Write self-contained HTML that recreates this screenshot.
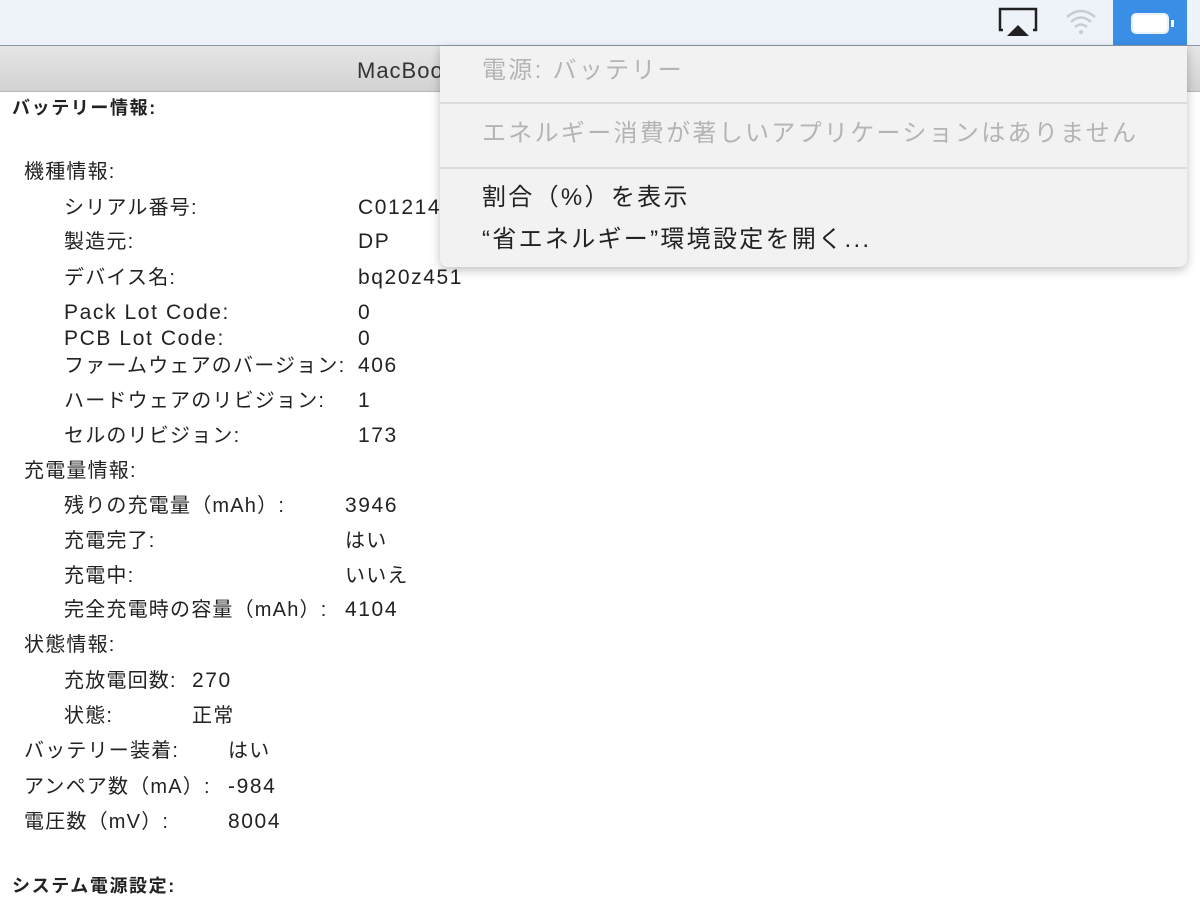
<!DOCTYPE html>
<html><head><meta charset="utf-8"><style>
*{margin:0;padding:0}
body{width:1200px;height:900px;overflow:hidden;background:#fff;position:relative;font-family:"Liberation Sans","Noto Sans CJK JP",sans-serif;color:#222}
.mb{position:absolute;left:0;top:0;width:1200px;height:45px;background:#eef3f9;border-bottom:1px solid #8a98a4}
.tb{position:absolute;left:0;top:46px;width:1200px;height:45px;background:linear-gradient(#e6e6e6,#d2d2d2);border-bottom:1px solid #b8b8b8}
.t{position:absolute;white-space:nowrap;font-size:20px;letter-spacing:1.2px;line-height:26px;transform:translateY(-13px)}
.v{font-size:21px;letter-spacing:1.6px}
.b{font-weight:bold;font-size:18px;letter-spacing:1.6px}
.menu{position:absolute;left:440px;top:46px;width:747px;height:221px;background:#f2f2f3;border-radius:0 0 8px 8px;box-shadow:0 3px 10px rgba(0,0,0,.25)}
.menu .t{font-size:24px;letter-spacing:2.3px;line-height:30px;transform:translateY(-15px)}
.sep{position:absolute;left:0;width:747px;height:2px;background:#dcdcdc}
</style></head><body>
<div class="mb"></div>
<div style="position:absolute;left:1113px;top:0;width:74px;height:45px;background:#3a8ee6"></div>
<svg style="position:absolute;left:995px;top:5px" width="200" height="36">
<path d="M8 25 H5 V4 H41 V25 H38" fill="none" stroke="#222" stroke-width="2.5"/>
<path d="M12 31 L23 20 L34 31 Z" fill="#222"/>
<g fill="none" stroke="#c8ccd0" stroke-width="2.5"><path d="M72 12 Q86 0 100 12"/><path d="M76 17 Q86 8 96 17"/><path d="M80 22 Q86 17 92 22"/></g>
<circle cx="86" cy="27" r="2" fill="#c8ccd0"/>
<rect x="137" y="9" width="36" height="19" rx="4" fill="#fff" stroke="#e8f0fb" stroke-width="2"/>
<rect x="176" y="15" width="3" height="7" fill="#fff"/>
</svg>
<div class="tb"></div>
<div class="t" style="left:357px;top:71px;font-size:22px;letter-spacing:1px;color:#333">MacBook</div>

<div class="t b" style="left:12px;top:108px">バッテリー情報:</div>
<div class="t" style="left:24px;top:172px">機種情報:</div>
<div class="t" style="left:64px;top:208px">シリアル番号:</div><div class="t v" style="left:358px;top:208px">C01214</div>
<div class="t" style="left:64px;top:242px">製造元:</div><div class="t v" style="left:358px;top:242px">DP</div>
<div class="t" style="left:64px;top:278px">デバイス名:</div><div class="t v" style="left:358px;top:278px">bq20z451</div>
<div class="t v" style="left:64px;top:313px">Pack Lot Code:</div><div class="t v" style="left:358px;top:313px">0</div>
<div class="t v" style="left:64px;top:339px">PCB Lot Code:</div><div class="t v" style="left:358px;top:339px">0</div>
<div class="t" style="left:64px;top:366px">ファームウェアのバージョン:</div><div class="t v" style="left:358px;top:366px">406</div>
<div class="t" style="left:64px;top:401px">ハードウェアのリビジョン:</div><div class="t v" style="left:358px;top:401px">1</div>
<div class="t" style="left:64px;top:436px">セルのリビジョン:</div><div class="t v" style="left:358px;top:436px">173</div>
<div class="t" style="left:24px;top:471px">充電量情報:</div>
<div class="t" style="left:64px;top:506px">残りの充電量（mAh）:</div><div class="t v" style="left:345px;top:506px">3946</div>
<div class="t" style="left:64px;top:541px">充電完了:</div><div class="t" style="left:345px;top:541px">はい</div>
<div class="t" style="left:64px;top:576px">充電中:</div><div class="t" style="left:345px;top:576px">いいえ</div>
<div class="t" style="left:64px;top:610px">完全充電時の容量（mAh）:</div><div class="t v" style="left:345px;top:610px">4104</div>
<div class="t" style="left:24px;top:645px">状態情報:</div>
<div class="t" style="left:64px;top:681px">充放電回数:</div><div class="t v" style="left:192px;top:681px">270</div>
<div class="t" style="left:64px;top:716px">状態:</div><div class="t" style="left:192px;top:716px">正常</div>
<div class="t" style="left:24px;top:751px">バッテリー装着:</div><div class="t" style="left:228px;top:751px">はい</div>
<div class="t" style="left:24px;top:787px">アンペア数（mA）:</div><div class="t v" style="left:228px;top:787px">-984</div>
<div class="t" style="left:24px;top:822px">電圧数（mV）:</div><div class="t v" style="left:228px;top:822px">8004</div>
<div class="t b" style="left:12px;top:886px">システム電源設定:</div>

<div class="menu">
<div class="t" style="left:42px;top:25px;color:#b4b4b4">電源: バッテリー</div>
<div class="sep" style="top:56px"></div>
<div class="t" style="left:42px;top:88px;color:#b4b4b4">エネルギー消費が著しいアプリケーションはありません</div>
<div class="sep" style="top:121px"></div>
<div class="t" style="left:42px;top:152px;color:#222">割合（%）を表示</div>
<div class="t" style="left:42px;top:194px;color:#222">“省エネルギー”環境設定を開く...</div>
</div>
</body></html>
